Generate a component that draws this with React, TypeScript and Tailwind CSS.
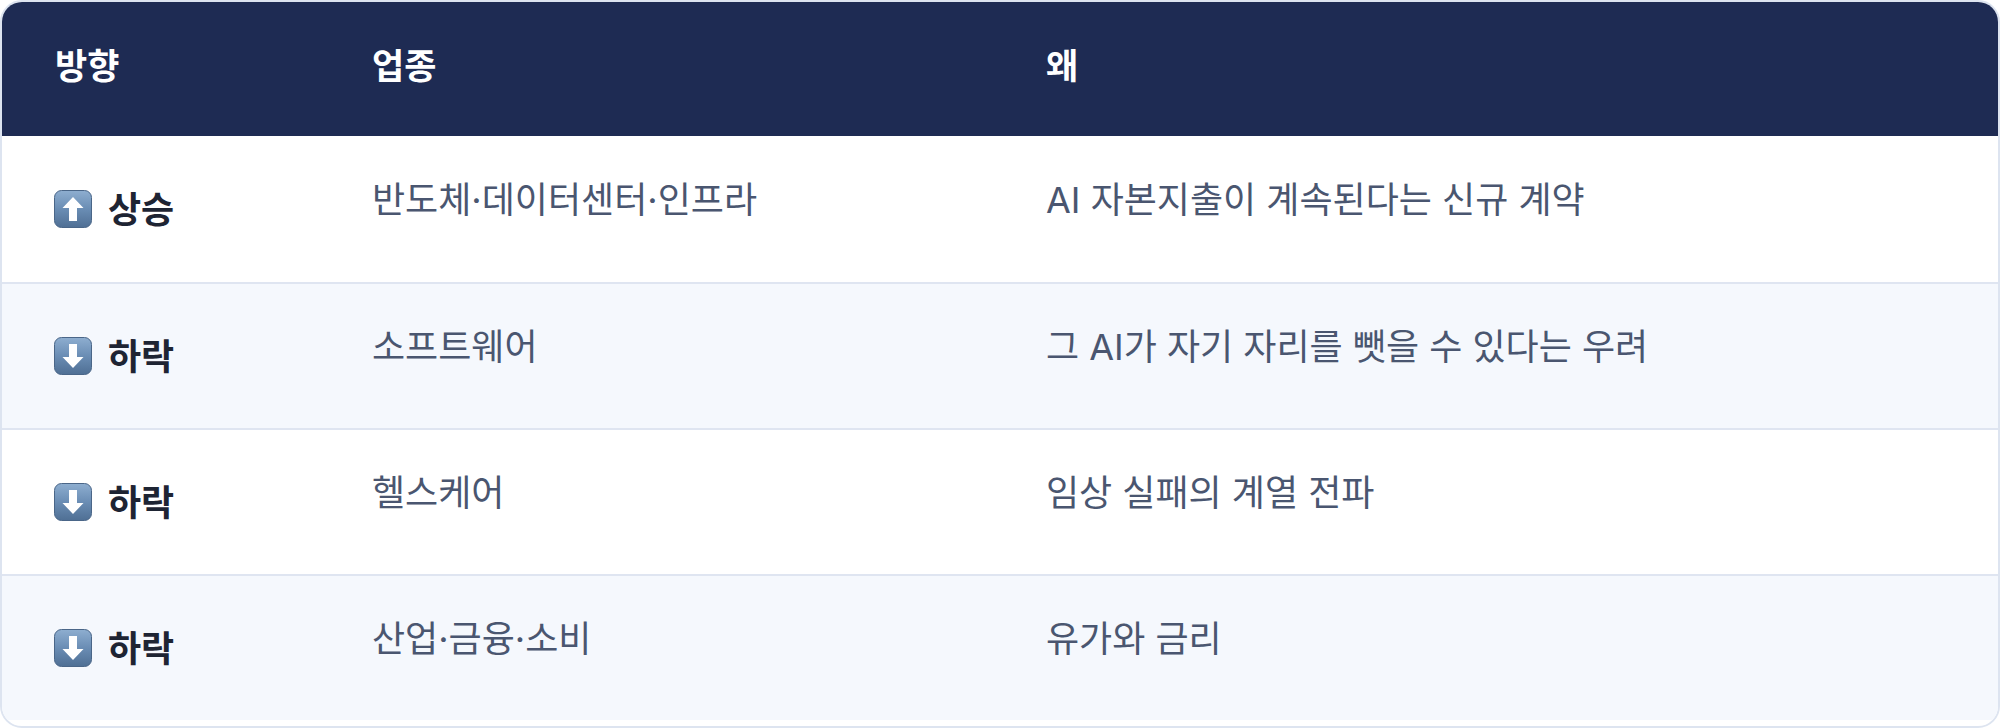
import React from "react";

interface Row {
  dir: "up" | "down";
  label: string;
  sector: string;
  why: string;
}

const rows: Row[] = [
  { dir: "up", label: "상승", sector: "반도체·데이터센터·인프라", why: "AI 자본지출이 계속된다는 신규 계약" },
  { dir: "down", label: "하락", sector: "소프트웨어", why: "그 AI가 자기 자리를 뺏을 수 있다는 우려" },
  { dir: "down", label: "하락", sector: "헬스케어", why: "임상 실패의 계열 전파" },
  { dir: "down", label: "하락", sector: "산업·금융·소비", why: "유가와 금리" },
];

const ArrowBox = ({ dir }: { dir: "up" | "down" }) => {
  const id = `g-${dir}`;
  return (
    <svg width="38" height="38" viewBox="0 0 38 38" className="shrink-0">
      <defs>
        <linearGradient id={id} x1="0" y1="0" x2="0" y2="1">
          <stop offset="0" stopColor="#8eaed0" />
          <stop offset="0.5" stopColor="#6a8db4" />
          <stop offset="1" stopColor="#4f6f94" />
        </linearGradient>
      </defs>
      <rect x="0.5" y="0.5" width="37" height="37" rx="7" fill={`url(#${id})`} stroke="#4a6688" strokeWidth="1" />
      {dir === "up" ? (
        <path d="M19 7 L29.5 18 L23 18 L23 31 L15 31 L15 18 L8.5 18 Z" fill="#fff" />
      ) : (
        <path d="M19 31 L29.5 20 L23 20 L23 7 L15 7 L15 20 L8.5 20 Z" fill="#fff" />
      )}
    </svg>
  );
};

const font = { fontFamily: 'Inter, "Noto Sans CJK KR", sans-serif' };

export default function App() {
  return (
    <div className="w-[2000px] h-[728px] bg-white" style={font}>
      <div className="w-full h-full rounded-[22px] border-2 border-[#dde4f0] overflow-hidden">
        <div className="grid grid-cols-[317px_674px_1fr] h-[134px] bg-[#1e2b53] text-white font-bold text-[35px]">
          <div className="flex items-center pl-[53px] pb-[6px]">방향</div>
          <div className="flex items-center pl-[53px] pb-[6px]">업종</div>
          <div className="flex items-center pl-[53px] pb-[6px]">왜</div>
        </div>
        {rows.map((r, i) => (
          <div
            key={i}
            className={`grid grid-cols-[317px_674px_1fr] h-[146px] ${i > 0 ? "border-t-2 border-[#dfe5f1]" : ""} ${i % 2 === 1 ? "bg-[#f5f8fd]" : "bg-white"}`}
          >
            <div className="flex items-center pl-[52px] gap-[16px]">
              <ArrowBox dir={r.dir} />
              <span className="font-bold text-[36px] text-[#1e2433] pt-[2px]">{r.label}</span>
            </div>
            <div className="flex items-center pl-[53px] pb-[18px] text-[36px] text-[#4a5670]">{r.sector}</div>
            <div className="flex items-center pl-[53px] pb-[18px] text-[36px] text-[#4a5670]">{r.why}</div>
          </div>
        ))}
      </div>
    </div>
  );
}
